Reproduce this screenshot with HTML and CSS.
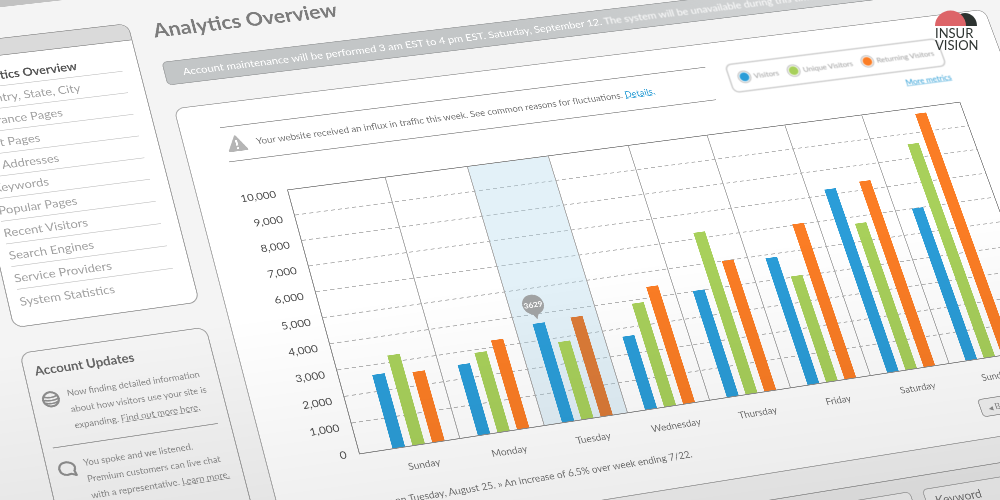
FILE: index.html
```html
<!DOCTYPE html>
<html lang="en">
<head>
    <meta charset="UTF-8">
    <meta name="viewport" content="width=device-width, initial-scale=1.0">
    <title>Analytics Overview</title>
    <link rel="stylesheet" href="styles.css">
</head>
<body>
    <div class="scene">
        <div class="page">
            <div class="topbar"></div>

            <div class="layout">
                <aside>
                    <nav class="sidebar">
                        <div class="sidebar-head"></div>
                        <ul>
                            <li><a class="current" href="#">Analytics Overview</a></li>
                            <li><a href="#">Country, State, City</a></li>
                            <li><a href="#">Entrance Pages</a></li>
                            <li><a href="#">Exit Pages</a></li>
                            <li><a href="#">IP Addresses</a></li>
                            <li><a href="#">Keywords</a></li>
                            <li><a href="#">Popular Pages</a></li>
                            <li><a href="#">Recent Visitors</a></li>
                            <li><a href="#">Search Engines</a></li>
                            <li><a href="#">Service Providers</a></li>
                            <li><a href="#">System Statistics</a></li>
                        </ul>
                    </nav>

                    <section class="updates">
                        <h2>Account Updates</h2>
                        <div class="update">
                            <svg class="update-icon" viewBox="0 0 34 34">
                                <circle cx="17" cy="17" r="14" fill="none" stroke="#8e8e8e" stroke-width="4"/>
                                <path d="M5 11q12 5 24 0M3 17q14 5 28 0M5 23q12 5 24 0" fill="none" stroke="#8e8e8e" stroke-width="3"/>
                            </svg>
                            <p>Now finding detailed information about how visitors use your site is expanding. <a href="#">Find out more here.</a></p>
                        </div>
                        <div class="update">
                            <svg class="update-icon" viewBox="0 0 34 34">
                                <path d="M16 4C8 4 3 9 3 16s5 12 13 12q3 0 6-1l9 4-2-9q2-3 2-6C31 9 24 4 16 4z" fill="none" stroke="#8e8e8e" stroke-width="4" stroke-linejoin="round"/>
                            </svg>
                            <p>You spoke and we listened. Premium customers can live chat with a representative. <a href="#">Learn more.</a></p>
                        </div>
                    </section>
                </aside>

                <main>
                    <h1>Analytics Overview</h1>
                    <div class="banner">Account maintenance will be performed 3 am EST to 4 pm EST. Saturday, September 12. <span class="far">The system will be unavailable during this time.</span></div>

                    <section class="panel">
                        <div class="panel-top">
                            <div class="alert">
                                <svg class="alert-icon" viewBox="0 0 40 36">
                                    <path d="M20 3 37 33H3z" fill="#b5b5b5" stroke="#b5b5b5" stroke-width="4" stroke-linejoin="round"/>
                                    <path d="M20 11v12M20 26.500v4" stroke="#fff" stroke-width="4"/>
                                </svg>
                                <p>Your website received an influx in traffic this week. See common reasons for fluctuations. <a href="#">Details.</a></p>
                            </div>
                            <div class="metrics">
                                <div class="legend">
                                    <span class="dot blue"></span><span>Visitors</span>
                                    <span class="dot green"></span><span>Unique Visitors</span>
                                    <span class="dot orange"></span><span>Returning Visitors</span>
                                </div>
                                <a href="#">More metrics</a>
                            </div>
                        </div>

                        <div class="chart">
                            <div class="scale">
                                <span>10,000</span>
                                <span>9,000</span>
                                <span>8,000</span>
                                <span>7,000</span>
                                <span>6,000</span>
                                <span>5,000</span>
                                <span>4,000</span>
                                <span>3,000</span>
                                <span>2,000</span>
                                <span>1,000</span>
                                <span>0</span>
                            </div>
                            <div class="plot">
                                <div class="lines">
                                    <i></i><i></i><i></i><i></i><i></i><i></i><i></i><i></i><i></i>
                                </div>
                                <div class="days">
                                    <div class="day">
                                        <div class="bar blue" style="height: 27.3%"></div>
                                        <div class="bar green" style="height: 33.5%"></div>
                                        <div class="bar orange" style="height: 26.2%"></div>
                                    </div>
                                    <div class="day">
                                        <div class="bar blue" style="height: 26.3%"></div>
                                        <div class="bar green" style="height: 29.8%"></div>
                                        <div class="bar orange" style="height: 33.5%"></div>
                                    </div>
                                    <div class="day active">
                                        <div class="bar blue" style="height: 37.3%"><span class="pin">3629</span></div>
                                        <div class="bar green" style="height: 29.3%"></div>
                                        <div class="bar orange" style="height: 37.7%"></div>
                                    </div>
                                    <div class="day">
                                        <div class="bar blue" style="height: 27.8%"></div>
                                        <div class="bar green" style="height: 39.6%"></div>
                                        <div class="bar orange" style="height: 45%"></div>
                                    </div>
                                    <div class="day">
                                        <div class="bar blue" style="height: 41%"></div>
                                        <div class="bar green" style="height: 63%"></div>
                                        <div class="bar orange" style="height: 50.7%"></div>
                                    </div>
                                    <div class="day">
                                        <div class="bar blue" style="height: 49.5%"></div>
                                        <div class="bar green" style="height: 41.3%"></div>
                                        <div class="bar orange" style="height: 61%"></div>
                                    </div>
                                    <div class="day">
                                        <div class="bar blue" style="height: 72.7%"></div>
                                        <div class="bar green" style="height: 57.8%"></div>
                                        <div class="bar orange" style="height: 74%"></div>
                                    </div>
                                    <div class="day">
                                        <div class="bar blue" style="height: 60.7%"></div>
                                        <div class="bar green" style="height: 86%"></div>
                                        <div class="bar orange" style="height: 97.8%"></div>
                                    </div>
                                </div>
                            </div>
                            <div class="day-names">
                                <span>Sunday</span>
                                <span>Monday</span>
                                <span>Tuesday</span>
                                <span>Wednesday</span>
                                <span>Thursday</span>
                                <span>Friday</span>
                                <span>Saturday</span>
                                <span>Sunday</span>
                            </div>
                        </div>

                        <div class="panel-foot">
                            <p>3,629 visitors on Tuesday, August 25. » An increase of 6.5% over week ending 7/22.</p>
                            <div class="pager">
                                <button type="button"><span class="arrow">◀</span> Back</button>
                                <button type="button">Next</button>
                            </div>
                        </div>
                    </section>

                    <section class="sources">
                        <div class="source"></div>
                        <div class="source"><h2>Keyword</h2></div>
                    </section>
                </main>
            </div>
        </div>

        <div class="shade"></div>

        <div class="logo">
            <svg viewBox="0 0 42 16">
                <path d="M18 16a12 13 0 0 1 24 0z" fill="#2d3330"/>
                <path d="M0 16a15.500 15.500 0 0 1 31 0z" fill="#dd6468"/>
            </svg>
            <div>INSUR</div>
            <div>VISION</div>
        </div>
    </div>
</body>
</html>
```
FILE: styles.css
```css
* {
    box-sizing: border-box;
}

body {
    margin: 0;
    font-family: Lato, "Liberation Sans", sans-serif;
    color: #777;
}

h1, h2, p, ul {
    margin: 0;
    padding: 0;
}

.scene {
    position: relative;
    height: 100vh;
    overflow: hidden;
    background-color: #f4f4f4;
}

/* the whole dashboard is laid flat and seen at an angle */
.page {
    width: 240%;
    transform-origin: 0 0;
    transform: matrix3d(0.52365, -0.05879, 0, 0.000042158, 0.10898, 0.453005, 0, -0.00006141, 0, 0, 1, 0, -127.84, 3.06, 0, 1);
}

.topbar {
    height: 40px;
    background-color: #c2c2c2;
}

.layout {
    display: grid;
    grid-template-columns: 348px 1fr;
    gap: 44px;
    padding: 66px 198px 0 122px;
}

/* Sidebar */
.sidebar {
    display: flex;
    flex-direction: column;
    height: 600px;
    background-color: #fff;
    border: 2px solid #a5a5a5;
    border-radius: 20px;
    overflow: hidden;
}

.sidebar-head {
    height: 36px;
    background-color: #dadada;
    border-bottom: 2px solid #a5a5a5;
}

.sidebar ul {
    flex: 1;
    display: grid;
    grid-auto-rows: 1fr;
    margin: 18px 32px 26px 20px;
    list-style: none;
}

.sidebar li {
    display: flex;
    align-items: center;
    border-bottom: 2px solid #d8d8d8;
}

.sidebar li:last-child {
    border-bottom: 0;
}

.sidebar a {
    font-size: 24px;
    color: #a3a3a3;
    text-decoration: none;
}

.sidebar .current {
    font-weight: bold;
    color: #555;
}

.updates {
    margin-top: 50px;
    padding: 22px 22px 40px 18px;
    border: 2px solid #a5a5a5;
    border-radius: 20px;
}

.updates h2 {
    margin-bottom: 20px;
    font-size: 24px;
    line-height: 32px;
    color: #666;
}

.update {
    display: flex;
    gap: 14px;
    padding-bottom: 20px;
    font-size: 17px;
    line-height: 32px;
    color: #8c8c8c;
}

.update + .update {
    padding-top: 20px;
    border-top: 2px solid #a5a5a5;
}

.update-icon {
    flex: none;
    width: 34px;
    height: 34px;
    margin-top: 6px;
}

.update a {
    color: inherit;
}

/* Main column */
h1 {
    font-size: 42px;
    line-height: 44px;
    color: #7c7c7c;
}

.banner {
    height: 52px;
    margin-top: 48px;
    padding-left: 34px;
    border: 2px solid #a8aaab;
    border-radius: 10px;
    background: linear-gradient(90deg, #c3c6c7 40%, #d2d4d5 80%);
    font-size: 22px;
    line-height: 48px;
    color: #fff;
}

.far {
    filter: blur(1px);
}

.panel {
    margin-top: 50px;
    padding: 50px 122px 42px 76px;
    border: 2px solid #b0b0b0;
    border-radius: 20px;
    background-color: #fff;
}

.panel-top {
    display: flex;
    align-items: flex-start;
    gap: 40px;
}

.alert {
    flex: 1;
    display: flex;
    align-items: center;
    gap: 18px;
    height: 76px;
    padding-left: 4px;
    border-top: 2px solid #a5a5a5;
    border-bottom: 2px solid #a5a5a5;
    font-size: 19px;
    color: #7a7a7a;
}

.alert-icon {
    width: 40px;
    height: 36px;
}

.panel a {
    color: #2f9fd6;
}

.metrics {
    display: flex;
    flex-direction: column;
    align-items: flex-end;
    width: 460px;
    font-size: 17px;
    line-height: 22px;
    filter: blur(1px);
}

.legend {
    display: flex;
    align-items: center;
    gap: 8px;
    width: 100%;
    height: 66px;
    margin-bottom: 14px;
    padding-left: 18px;
    border: 3px solid #ccc;
    border-radius: 14px;
    font-size: 16px;
    color: #9a9a9a;
}

.dot {
    width: 24px;
    height: 24px;
    border: 2px solid #fff;
    border-radius: 50%;
    box-shadow: 0 0 0 2px #bbb;
}

.dot:not(:first-child) {
    margin-left: 12px;
}

.blue {
    background-color: #2b9dd8;
}

.green {
    background-color: #a8d05b;
}

.orange {
    background-color: #fb7d25;
}

/* Chart */
.chart {
    display: grid;
    grid-template-columns: 95px 1fr;
    margin-top: 46px;
}

.scale {
    height: 550px;
    margin-top: -21px;
    padding-right: 23px;
    text-align: right;
    font-size: 22px;
    line-height: 54px;
    color: #555;
}

.scale span {
    display: block;
}

.plot {
    display: grid;
    height: 550px;
    border: 2px solid #8f8f8f;
}

.lines, .days {
    grid-area: 1 / 1;
}

.lines i {
    display: block;
    height: 54px;
    background: repeating-linear-gradient(90deg, #b5b5b5 0 8px, transparent 8px 14px) bottom / 100% 2px no-repeat;
}

.days {
    display: grid;
    grid-template-columns: 192px repeat(6, 164px) 1fr;
}

.day {
    display: flex;
    align-items: flex-end;
    gap: 14px;
    padding-left: 34px;
    border-right: 2px solid #adadad;
}

.day:first-child {
    padding-left: 62px;
}

.day:last-child {
    border-right: 0;
}

.active {
    background-color: rgba(176, 216, 236, 0.35);
}

.bar {
    position: relative;
    width: 24px;
}

.active .orange {
    background-color: #dc7b38;
}

.pin {
    position: absolute;
    bottom: calc(100% + 18px);
    left: 50%;
    width: 42px;
    height: 42px;
    margin-left: -21px;
    border-radius: 50%;
    background-color: #a2a4a5;
    text-align: center;
    font-size: 16px;
    font-weight: bold;
    line-height: 42px;
    color: #fff;
}

.pin::after {
    content: "";
    position: absolute;
    top: 38px;
    left: 14px;
    border: 7px solid transparent;
    border-top: 14px solid #a2a4a5;
    border-bottom: 0;
}

.day-names {
    grid-column: 2;
    display: grid;
    grid-template-columns: repeat(8, 164px);
    margin-top: 26px;
    padding-left: 32px;
    text-align: center;
    font-size: 19px;
    line-height: 24px;
}

.panel-foot {
    display: flex;
    justify-content: space-between;
    margin-top: 30px;
    padding-left: 20px;
    font-size: 19px;
    line-height: 38px;
}

.pager {
    display: flex;
    gap: 12px;
}

.pager button {
    width: 86px;
    height: 38px;
    border: 2px solid #a5a5a5;
    border-radius: 8px;
    background-color: #f4f4f4;
    font-family: inherit;
    font-size: 18px;
    color: #8c8c8c;
}

.arrow {
    font-size: 12px;
}

.sources {
    display: grid;
    grid-template-columns: 1158px 1fr;
    gap: 24px;
    margin-top: 50px;
    padding: 26px;
    border: 2px solid #a5a5a5;
    border-radius: 20px;
    background-color: #ececec;
}

.source {
    height: 200px;
    padding: 8px 18px;
    border: 2px solid #b0b0b0;
    border-radius: 10px;
    background-color: #f4f4f4;
}

.source h2 {
    font-size: 24px;
    font-weight: normal;
    line-height: 32px;
}

/* light falls off towards the bottom */
.shade {
    position: absolute;
    inset: 0;
    background: linear-gradient(172deg, rgba(0, 0, 0, 0) 55%, rgba(0, 0, 0, 0.09) 100%);
    pointer-events: none;
}

.logo {
    position: absolute;
    top: 10px;
    right: 23px;
    width: 42px;
    font-size: 13px;
    line-height: 12px;
    color: #2d3330;
}

.logo svg {
    display: block;
    width: 42px;
    height: 16px;
    margin-bottom: 1px;
}
```
